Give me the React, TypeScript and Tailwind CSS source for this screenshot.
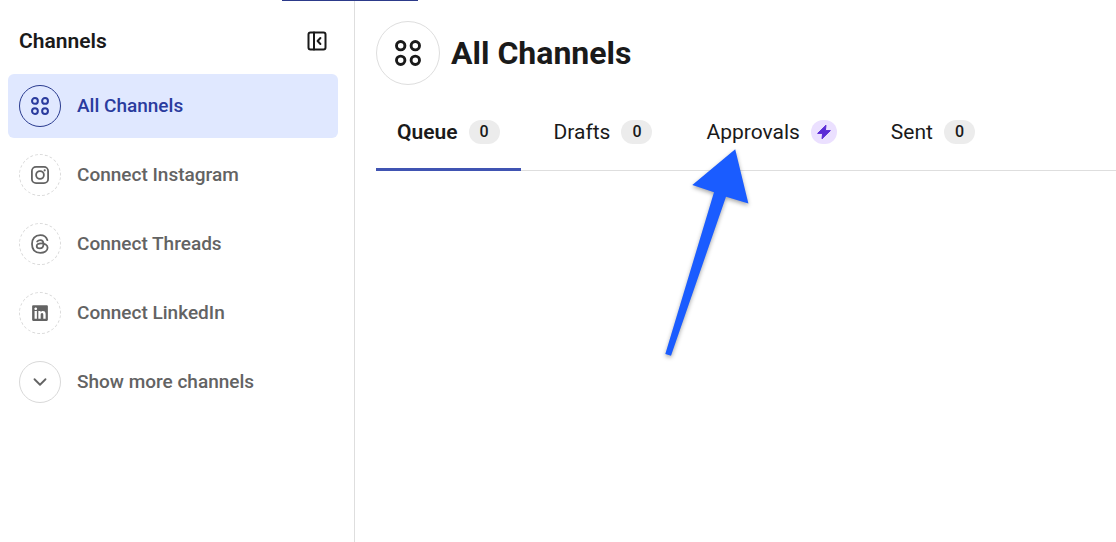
import React, { useState } from "react";
import { ChevronDown } from "lucide-react";
import { FaLinkedin } from "react-icons/fa";

const AllChannelsIcon = ({ className }: { className: string }) => (
  <svg viewBox="0 0 26 26" fill="none" stroke="currentColor" strokeWidth="2.9" className={className} aria-hidden="true">
    <circle cx="5.7" cy="5.7" r="4.2" />
    <circle cx="20.3" cy="5.7" r="4.2" />
    <circle cx="5.7" cy="20.3" r="4.2" />
    <circle cx="20.3" cy="20.3" r="4.2" />
  </svg>
);

const CollapseIcon = () => (
  <svg viewBox="0 0 20 20" fill="none" stroke="currentColor" strokeWidth="2" strokeLinecap="round" strokeLinejoin="round" className="w-5 h-5" aria-hidden="true">
    <rect x="1.5" y="1.5" width="17" height="17" rx="2" />
    <path d="M7 1.5v17M13.4 7 10.6 10l2.8 3" />
  </svg>
);

const InstagramIcon = () => (
  <svg viewBox="0 0 18 18" fill="none" stroke="currentColor" strokeWidth="1.8" className="w-[18px] h-[18px]" aria-hidden="true">
    <rect x="0.9" y="0.9" width="16.2" height="16.2" rx="4.2" />
    <circle cx="9" cy="9" r="3.9" />
    <circle cx="13.7" cy="4.3" r="1.1" fill="currentColor" stroke="none" />
  </svg>
);

const ThreadsIcon = () => (
  <svg viewBox="0 0 20 20" fill="none" stroke="currentColor" strokeWidth="1.8" strokeLinecap="round" className="w-5 h-5" aria-hidden="true">
    <path d="M17.4 6.2C16.4 2.9 13.8 1.2 10.3 1.2 4.9 1.2 2 4.6 2 10s2.9 8.8 8.3 8.8c4 0 7.3-2 7.3-5 0-2.8-3-4.4-6.6-4.4-2.5 0-4.3.9-4.3 2.6 0 1.5 1.3 2.4 3 2.4 2.6 0 3.8-1.8 3.8-4.4 0-2.4-1.1-3.9-3.3-3.9-1.4 0-2.3.5-3 1.5" />
  </svg>
);

const BoltIcon = () => (
  <svg viewBox="0 0 16 16" fill="currentColor" stroke="currentColor" strokeWidth="1" strokeLinejoin="round" className="w-4 h-4" aria-hidden="true">
    <path d="M10 1.2 1.6 9.4H6.6L6 14.8 14.4 6.6H9.4Z" />
  </svg>
);

const channels = [
  { id: "all", label: "All Channels", icon: <AllChannelsIcon className="w-[18px] h-[18px]" />, ring: "border-solid" },
  { id: "instagram", label: "Connect Instagram", icon: <InstagramIcon />, ring: "border-dashed" },
  { id: "threads", label: "Connect Threads", icon: <ThreadsIcon />, ring: "border-dashed" },
  { id: "linkedin", label: "Connect LinkedIn", icon: <FaLinkedin className="w-[18px] h-[18px]" />, ring: "border-dashed" },
  { id: "more", label: "Show more channels", icon: <ChevronDown className="w-[22px] h-[22px]" />, ring: "border-solid" },
];

const tabs = [
  { id: "queue", label: "Queue", count: 0 },
  { id: "drafts", label: "Drafts", count: 0 },
  { id: "approvals", label: "Approvals", count: null },
  { id: "sent", label: "Sent", count: 0 },
];

export default function App() {
  const [activeChannel, setActiveChannel] = useState("all");
  const [activeTab, setActiveTab] = useState("queue");

  return (
    <div className="relative flex min-h-screen bg-white font-['Roboto',sans-serif] text-[#1a1a1a]">
      <div className="absolute top-0 left-[282px] w-[136px] h-px bg-[#2c3a8a]" />

      <aside className="w-[355px] shrink-0 border-r border-[#dedede] px-2 pt-5">
        <div className="flex items-center justify-between h-[42px] pl-[11px] pr-[19px] mb-3">
          <h2 className="text-[21px] leading-6 font-semibold">Channels</h2>
          <button type="button" aria-label="Collapse sidebar">
            <CollapseIcon />
          </button>
        </div>
        <nav className="flex flex-col gap-[5px] pr-2">
          {channels.map((channel) => {
            const active = channel.id === activeChannel;
            return (
              <button
                key={channel.id}
                type="button"
                onClick={() => setActiveChannel(channel.id)}
                className={`flex items-center gap-4 h-16 px-[11px] rounded-md text-left text-[19px] leading-6 font-medium ${
                  active ? "bg-[#e0e8ff] text-[#2a3b9e]" : "text-[#636363]"
                }`}
              >
                <span
                  className={`flex items-center justify-center w-[42px] h-[42px] shrink-0 rounded-full border ${channel.ring} ${
                    active ? "border-[#2a3b8f]" : "border-[#d9d9d9]"
                  }`}
                >
                  {channel.icon}
                </span>
                {channel.label}
              </button>
            );
          })}
        </nav>
      </aside>

      <main className="flex-1 min-w-0 pl-[21px] pt-[21px]">
        <header className="flex items-center gap-[11px]">
          <span className="flex items-center justify-center w-16 h-16 shrink-0 rounded-full border border-[#dedede]">
            <AllChannelsIcon className="w-[26px] h-[26px]" />
          </span>
          <h1 className="text-[32px] leading-10 font-bold">All Channels</h1>
        </header>

        <div role="tablist" className="flex gap-3 h-[86px] border-b border-[#dedede]">
          {tabs.map((tab) => {
            const active = tab.id === activeTab;
            return (
              <button
                key={tab.id}
                type="button"
                role="tab"
                aria-selected={active}
                onClick={() => setActiveTab(tab.id)}
                className={`flex items-center gap-[11px] h-[86px] px-[21px] pt-2.5 border-b-3 text-[21px] leading-6 ${
                  active ? "font-semibold border-[#4054b2]" : "border-transparent"
                }`}
              >
                {tab.label}
                {tab.count === null ? (
                  <span className="flex items-center justify-center w-[26px] h-6 rounded-full bg-[#ebe0ff] text-[#5b2bd6]">
                    <BoltIcon />
                  </span>
                ) : (
                  <span className="flex items-center justify-center w-[31px] h-6 rounded-full bg-[#ececec] text-base font-medium">
                    {tab.count}
                  </span>
                )}
              </button>
            );
          })}
        </div>
      </main>

      <svg
        viewBox="0 0 100 220"
        className="absolute left-[660px] top-[145px] w-[100px] h-[220px] pointer-events-none drop-shadow-[0_2px_2px_rgba(0,0,0,0.35)]"
        aria-hidden="true"
      >
        <path d="M75.2 4.3 32.3 40 54 47.3 5.3 209 11 210.8 66 51.7 88.4 58.5Z" fill="#1a5cff" />
      </svg>
    </div>
  );
}
